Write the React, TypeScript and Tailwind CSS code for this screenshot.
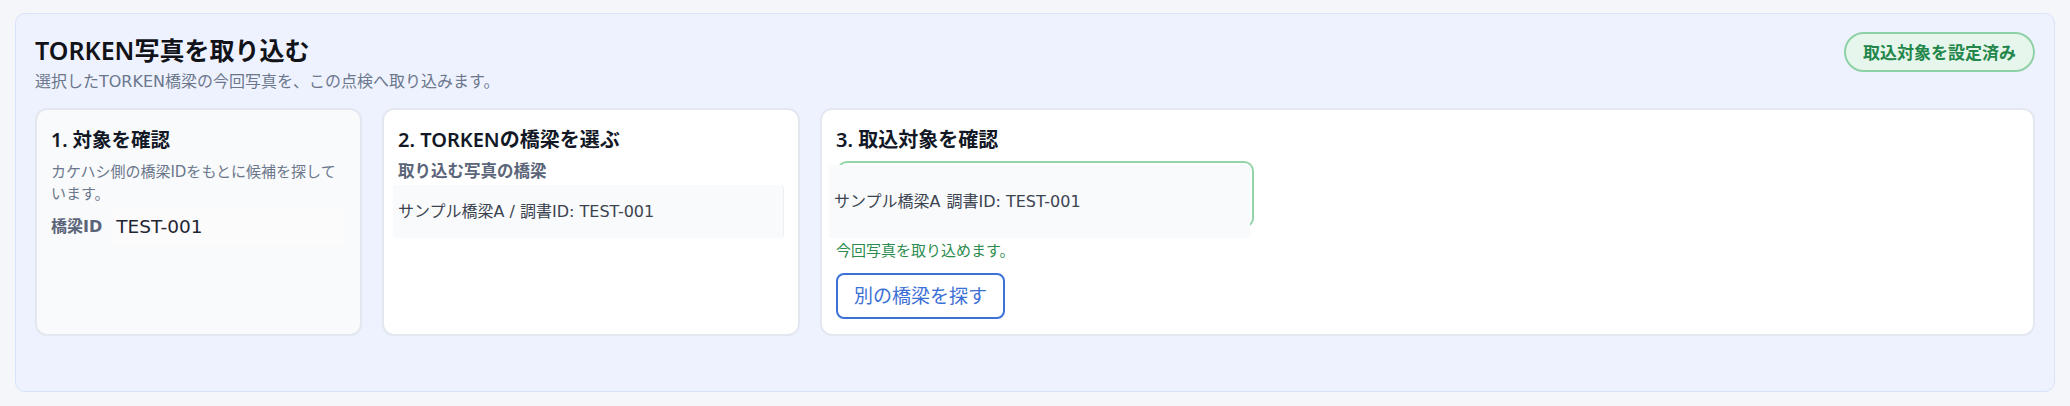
import React from "react";

export default function App() {
  return (
    <div className="min-h-screen bg-[#f4f6fa] px-[15px] pt-[13px] pb-[14px] [font-family:'DejaVu_Sans','Noto_Sans_CJK_JP',sans-serif]">
      <section className="rounded-[10px] border border-[#d8e2fa] bg-[#eef2fe] px-[19px] pt-[20px] pb-[55px]">
        <div className="flex items-start justify-between">
          <div>
            <h2 className="text-[25px] font-semibold leading-[32px] text-[#111318] [font-family:'Noto_Sans','Noto_Sans_CJK_JP',sans-serif]">
              TORKEN写真を取り込む
            </h2>
            <p className="mt-[4px] text-[16px] leading-[24px] text-[#6b778c]">
              選択したTORKEN橋梁の今回写真を、この点検へ取り込みます。
            </p>
          </div>
          <span className="-mt-[2px] inline-flex h-[40px] items-center rounded-full border-2 border-[#8fd1a6] bg-[#e7f6ec] px-[17px] text-[17px] font-bold text-[#23874b] [font-family:'Noto_Sans_CJK_JP',sans-serif]">
            取込対象を設定済み
          </span>
        </div>

        <div className="mt-[14px] flex gap-[20px]">
          {/* Card 1 */}
          <div className="w-[327px] rounded-[12px] border-2 border-[#e3e7ef] bg-[#f9fafb] px-[14px] pt-[16px] pb-[15px]">
            <h3 className="text-[19.5px] font-semibold leading-[28px] text-[#121826] [font-family:'Noto_Sans','Noto_Sans_CJK_JP',sans-serif]">
              1. 対象を確認
            </h3>
            <p className="mt-[7px] text-[15px] leading-[22px] text-[#6b778c]">
              カケハシ側の橋梁IDをもとに候補を探しています。
            </p>
            <dl className="mt-[3px] flex items-center gap-[9px]">
              <dt className="text-[16px] font-bold leading-[22px] text-[#5b6579]">橋梁ID</dt>
              <dd className="flex-1 rounded-[4px] bg-[#fbfbfc] px-[5px] py-[8px] text-[18.5px] leading-[21px] text-[#1f2633]">
                TEST-001
              </dd>
            </dl>
          </div>

          {/* Card 2 */}
          <div className="w-[418px] rounded-[12px] border-2 border-[#e3e7ef] bg-white px-[14px] pt-[16px] pb-[15px]">
            <h3 className="text-[20px] font-semibold leading-[28px] text-[#121826] [font-family:'Noto_Sans','Noto_Sans_CJK_JP',sans-serif]">
              2. TORKENの橋梁を選ぶ
            </h3>
            <p className="mt-[7px] text-[16.5px] font-bold leading-[22px] text-[#5b6579]">
              取り込む写真の橋梁
            </p>
            <div className="-ml-[5px] mt-[2px] rounded-[4px] border-r border-[#eceef2] bg-[#f8fafc] py-[15px] pl-[5px] text-[16px] leading-[23px] text-[#3c4350]">
              サンプル橋梁A / 調書ID: TEST-001
            </div>
          </div>

          {/* Card 3 */}
          <div className="flex-1 rounded-[12px] border-2 border-[#e3e7ef] bg-white px-[14px] pt-[16px] pb-[15px]">
            <h3 className="text-[20px] font-semibold leading-[28px] text-[#121826] [font-family:'Noto_Sans','Noto_Sans_CJK_JP',sans-serif]">
              3. 取込対象を確認
            </h3>
            <div className="ml-[1px] mt-[7px] w-[417px] rounded-[10px] border-2 border-[#93d5a9]">
              <div className="-mb-[12px] -ml-[10px] mr-[2px] mt-[2px] flex gap-[6px] bg-[#f8fafc] py-[25px] pl-[5px] text-[16px] leading-[23px] text-[#3c4350]">
                <span>サンプル橋梁A</span>
                <span>調書ID: TEST-001</span>
              </div>
            </div>
            <p className="mt-[12px] text-[15px] leading-[22px] text-[#2c8c4f]">
              今回写真を取り込めます。
            </p>
            <button
              type="button"
              className="mt-[11px] h-[46px] rounded-[8px] border-2 border-[#3c71d8] bg-white px-[16px] text-[19px] leading-[24px] text-[#3c70d6]"
            >
              別の橋梁を探す
            </button>
          </div>
        </div>
      </section>
    </div>
  );
}
